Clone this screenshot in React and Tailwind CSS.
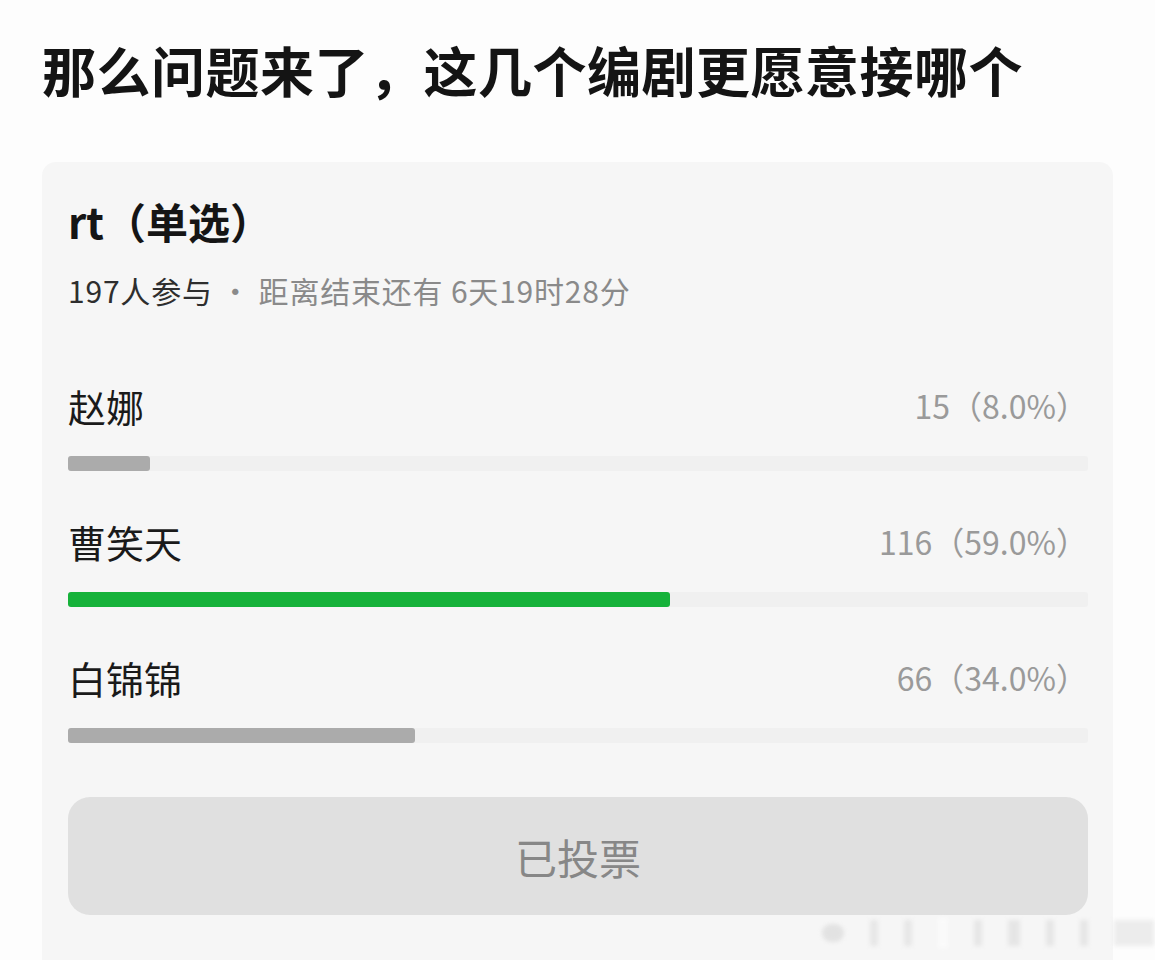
import React from "react";

const options = [
  { name: "赵娜", count: "15（8.0%）", pct: 8, color: "bg-[#ababab]" },
  { name: "曹笑天", count: "116（59.0%）", pct: 59, color: "bg-[#16b23a]" },
  { name: "白锦锦", count: "66（34.0%）", pct: 34, color: "bg-[#ababab]" },
];

export default function App() {
  return (
    <div
      className="relative w-[1155px] h-[960px] overflow-hidden bg-[#fdfdfd] px-[42px] pt-[38px]"
      style={{ fontFamily: '"Noto Sans CJK SC", "Noto Sans", sans-serif' }}
    >
      <h1 className="h-[64px] leading-[64px] text-[54px] font-bold text-[#141414] tracking-[0.5px]">
        那么问题来了，这几个编剧更愿意接哪个
      </h1>

      <div className="mt-[60px] w-[1071px] rounded-[14px] bg-[#f6f6f6] pl-[26px] pr-[25px] pt-[34px] pb-[60px]">
        <div className="h-[50px] leading-[50px] text-[42px] font-bold text-[#151515]">
          rt（单选）
        </div>
        <div className="mt-[24px] h-[40px] leading-[40px] text-[30px] tracking-[0.8px] text-[#8a8a8a]">
          <span className="text-[#2e2e2e]">197人参与</span> · 距离结束还有 6天19时28分
        </div>

        <div className="mt-[71px] flex flex-col gap-[46px]">
          {options.map((o) => (
            <div key={o.name}>
              <div className="flex h-[48px] items-center justify-between">
                <span className="text-[38px] text-[#1a1a1a]">{o.name}</span>
                <span className="text-[32px] text-[#9a9a9a]">{o.count}</span>
              </div>
              <div className="mt-[27px] h-[15px] w-full rounded-[3px] bg-[#f0f0f0]">
                <div
                  className={`h-full rounded-[3px] ${o.color}`}
                  style={{ width: `${o.pct}%` }}
                />
              </div>
            </div>
          ))}
        </div>

        <div className="mt-[54px] flex h-[118px] items-center justify-center rounded-[22px] bg-[#e0e0e0] text-[42px] text-[#878787]">
          已投票
        </div>
      </div>

      <div className="absolute left-[822px] top-[918px] flex h-[30px] items-center gap-[26px] opacity-50 blur-[2px]">
        <div className="h-[18px] w-[22px] rounded-full bg-[#cfcfcf]" />
        <div className="h-[26px] w-[8px] bg-[#d8d8d8]" />
        <div className="h-[26px] w-[8px] bg-[#d8d8d8]" />
        <div className="h-[30px] w-[10px] bg-[#ffffff]" />
        <div className="h-[26px] w-[8px] bg-[#d6d6d6]" />
        <div className="h-[26px] w-[12px] bg-[#d6d6d6]" />
        <div className="h-[26px] w-[8px] bg-[#d6d6d6]" />
        <div className="h-[26px] w-[8px] bg-[#d6d6d6]" />
        <div className="h-[26px] w-[40px] bg-[#dcdcdc]" />
      </div>
    </div>
  );
}
